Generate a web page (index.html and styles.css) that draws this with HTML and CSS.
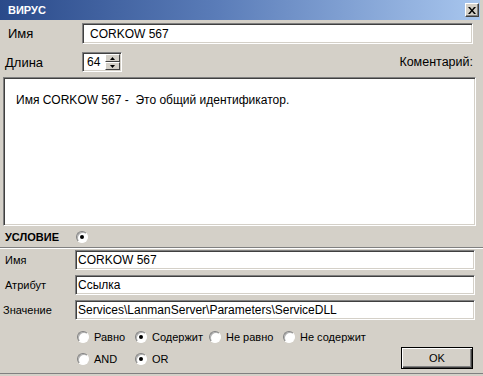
FILE: index.html
```html
<!DOCTYPE html>
<html>
<head>
<meta charset="utf-8">
<link rel="stylesheet" href="styles.css">
</head>
<body>
<div class="window">
  <div class="titlebar">
    <span class="title">ВИРУС</span>
    <span class="close"><svg width="8" height="7" viewBox="0 0 8 7"><path d="M0 0h2l2 2.5 2-2.5h2L5 3.5 8 7H6L4 4.5 2 7H0l3-3.5z" fill="#000"/></svg></span>
  </div>

  <div class="row row-name">
    <span class="lbl lbl-top">Имя</span>
    <div class="input input-top">CORKOW 567</div>
  </div>

  <div class="row row-len">
    <span class="lbl lbl-top">Длина</span>
    <div class="spin">
      <span class="spin-val">64</span>
      <span class="spin-btns">
        <span class="sbtn"><svg width="5" height="3" viewBox="0 0 5 3"><path d="M2.5 0L5 3H0z" fill="#000"/></svg></span>
        <span class="sbtn"><svg width="5" height="3" viewBox="0 0 5 3"><path d="M0 0h5L2.5 3z" fill="#000"/></svg></span>
      </span>
    </div>
    <span class="comment-lbl">Коментарий:</span>
  </div>

  <div class="memo">Имя CORKOW 567 -&nbsp; Это общий идентификатор.</div>

  <div class="cond-head">
    <span class="cond-title">УСЛОВИЕ</span>
    <span class="radio on"></span>
  </div>
  <div class="groove"></div>

  <div class="fields">
    <span class="lbl lbl-sm">Имя</span>
    <div class="input input-sm">CORKOW 567</div>
    <span class="lbl lbl-sm">Атрибут</span>
    <div class="input input-sm">Ссылка</div>
    <span class="lbl lbl-sm lbl-val">Значение</span>
    <div class="input input-sm">Services\LanmanServer\Parameters\ServiceDLL</div>
  </div>

  <div class="opts opts-1">
    <label class="opt"><span class="radio"></span>Равно</label>
    <label class="opt"><span class="radio on"></span>Содержит</label>
    <label class="opt"><span class="radio"></span>Не равно</label>
    <label class="opt"><span class="radio"></span>Не содержит</label>
  </div>

  <div class="last-row">
    <div class="opts opts-2">
      <label class="opt"><span class="radio"></span>AND</label>
      <label class="opt"><span class="radio on"></span>OR</label>
    </div>
    <button class="ok">OK</button>
  </div>

  <div class="bottom-line"></div>
</div>
</body>
</html>
```
FILE: styles.css
```css
* { box-sizing: border-box; }
html, body { margin: 0; padding: 0; }
body {
  background: #d4d0c8;
  font-family: "Liberation Sans", Arial, sans-serif;
  color: #000;
  width: 483px;
  height: 376px;
  overflow: hidden;
}
.window {
  width: 483px;
  height: 376px;
  display: flex;
  flex-direction: column;
  background: #d4d0c8;
}
.titlebar {
  height: 20px;
  margin-right: 3px;
  background: linear-gradient(to right, #2a4a8a 0%, #5a7cb8 45%, #a8c6ee 100%);
  display: flex;
  align-items: center;
  justify-content: space-between;
  padding: 0 1px 0 8px;
}
.title {
  color: #fff;
  font-weight: bold;
  font-size: 11px;
}
.close {
  width: 14px;
  height: 14px;
  background: #d4d0c8;
  border-top: 1px solid #fff;
  border-left: 1px solid #fff;
  border-right: 1px solid #404040;
  border-bottom: 1px solid #404040;
  box-shadow: inset -1px -1px #808080;
  display: flex;
  align-items: center;
  justify-content: center;
  padding-right: 1px;
}
.row {
  display: flex;
  align-items: center;
}
.lbl-top {
  font-size: 13px;
  width: 82px;
  flex: none;
}
.row-name {
  margin-top: 3px;
  height: 21px;
  padding-left: 8px;
  padding-right: 10px;
}
.row-name .lbl-top { width: 74px; }
.input {
  background: #fff;
  border-top: 1px solid #808080;
  border-left: 1px solid #808080;
  border-right: 1px solid #fff;
  border-bottom: 1px solid #fff;
  box-shadow: inset 1px 1px #404040, inset -1px -1px #d4d0c8;
  display: flex;
  align-items: center;
  white-space: nowrap;
  overflow: hidden;
}
.input-top {
  flex: 1;
  height: 21px;
  font-size: 12px;
  padding-left: 7px;
}
.row-len {
  margin-top: 8px;
  height: 20px;
  padding-left: 5px;
  padding-right: 10px;
}
.row-len .lbl-top { width: 77px; }
.spin {
  width: 40px;
  height: 20px;
  background: #fff;
  border-top: 1px solid #808080;
  border-left: 1px solid #808080;
  border-right: 1px solid #fff;
  border-bottom: 1px solid #fff;
  box-shadow: inset 1px 1px #404040, inset -1px -1px #d4d0c8;
  display: flex;
  align-items: center;
  justify-content: space-between;
  padding: 2px 1px 2px 4px;
  font-size: 12px;
}
.spin-btns {
  width: 15px;
  height: 16px;
  display: flex;
  flex-direction: column;
}
.sbtn {
  flex: 1;
  background: #d4d0c8;
  border-top: 1px solid #fff;
  border-left: 1px solid #fff;
  border-right: 1px solid #404040;
  border-bottom: 1px solid #404040;
  display: flex;
  align-items: center;
  justify-content: center;
}
.sbtn svg { display: block; }
.comment-lbl {
  margin-left: auto;
  font-size: 12.5px;
}
.memo {
  margin: 5px 7px 0 3px;
  height: 149px;
  background: #fff;
  border-top: 1px solid #808080;
  border-left: 1px solid #808080;
  border-right: 1px solid #fff;
  border-bottom: 1px solid #fff;
  box-shadow: inset 1px 1px #404040, inset -1px -1px #d4d0c8;
  font-size: 12px;
  line-height: 15px;
  padding: 15px 10px 0 12px;
}
.cond-head {
  height: 20px;
  display: flex;
  align-items: center;
  padding-left: 5px;
  margin-top: 1px;
}
.cond-title {
  font-weight: bold;
  font-size: 11px;
  width: 71px;
}
.groove {
  height: 2px;
  border-top: 1px solid #808080;
  border-bottom: 1px solid #fff;
}
.fields {
  margin-top: 1px;
  display: grid;
  grid-template-columns: 75px 1fr;
  grid-auto-rows: 20px;
  row-gap: 5px;
  padding-right: 8px;
  align-items: center;
}
.lbl-sm {
  font-size: 11px;
  padding-left: 5px;
}
.lbl-val { padding-left: 3px; }
.input-sm {
  height: 20px;
  font-size: 12px;
  padding-left: 2px;
}
.opts {
  display: grid;
  grid-template-columns: 58px 74px 74px auto;
  padding-left: 77px;
  font-size: 11px;
}
.opts-1 {
  margin-top: 9px;
  height: 16px;
  align-items: center;
}
.opt {
  display: flex;
  align-items: center;
  gap: 5px;
  white-space: nowrap;
}
.radio {
  width: 12px;
  height: 12px;
  flex: none;
  border-radius: 50%;
  background: #fff;
  border: 1px solid;
  border-color: #808080 #fff #fff #808080;
  box-shadow: inset 1px 1px #b0b0b0;
  display: flex;
  align-items: center;
  justify-content: center;
}
.radio.on::after {
  content: "";
  width: 4px;
  height: 4px;
  border-radius: 50%;
  background: #000;
}
.last-row {
  margin-top: 2px;
  height: 22px;
  display: flex;
  align-items: center;
  padding-right: 10px;
}
.opts-2 {
  flex: 1;
  align-items: center;
  margin-top: 2px;
}
.ok {
  width: 72px;
  height: 22px;
  font-family: "Liberation Sans", Arial, sans-serif;
  font-size: 11px;
  color: #000;
  background: #d4d0c8;
  border: 1px solid #000;
  box-shadow: inset 1px 1px #fff, inset -1px -1px #404040, inset -2px -2px #808080;
  padding: 0;
}
.bottom-line {
  margin-top: 4px;
  height: 1px;
  background: #808080;
}
```
